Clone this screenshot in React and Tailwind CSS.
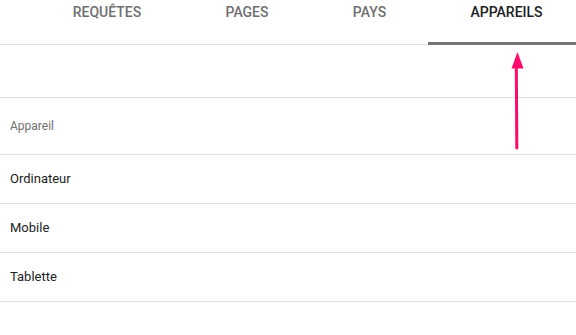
export default function App() {
  const tabs = [
    { label: "REQUÊTES", w: "w-[152px]" },
    { label: "PAGES", w: "w-[128px]" },
    { label: "PAYS", w: "w-[117px]" },
  ];
  const rows = ["Ordinateur", "Mobile", "Tablette"];
  return (
    <div className="relative w-[576px] h-[335px] overflow-hidden bg-white font-['Roboto',sans-serif]">
      <div className="flex h-[45px] border-b border-[#e0e0e0] pl-[31px]">
        {tabs.map((t) => (
          <div
            key={t.label}
            className={`${t.w} shrink-0 text-center pt-[2px] text-[14px] leading-[20px] font-medium text-[#6f6f6f]`}
          >
            {t.label}
          </div>
        ))}
        <div className="relative w-[157px] shrink-0 text-center pt-[2px] text-[14px] leading-[20px] font-medium text-[#202124]">
          APPAREILS
          <div className="absolute left-0 right-0 bottom-[-1px] h-[3px] bg-[#757575]" />
        </div>
      </div>
      <div className="h-[53px] border-b border-[#e0e0e0]" />
      <div className="h-[57px] border-b border-[#e0e0e0] flex items-center px-[10px] text-[12px] leading-[16px] text-[#6f6f6f]">
        Appareil
      </div>
      {rows.map((r) => (
        <div
          key={r}
          className="h-[49px] border-b border-[#e0e0e0] flex items-center px-[10px] text-[13px] leading-[20px] text-[#202124]"
        >
          {r}
        </div>
      ))}
      <svg
        className="absolute left-[505px] top-[50px]"
        width="24"
        height="100"
        viewBox="0 0 24 100"
      >
        <line x1="11.3" y1="14" x2="11.8" y2="98" stroke="#ff0a6c" strokeWidth="3" strokeLinecap="round" />
        <polygon points="12.5,2 6.5,18.5 18.5,18.5" fill="#ff0a6c" />
      </svg>
    </div>
  );
}
